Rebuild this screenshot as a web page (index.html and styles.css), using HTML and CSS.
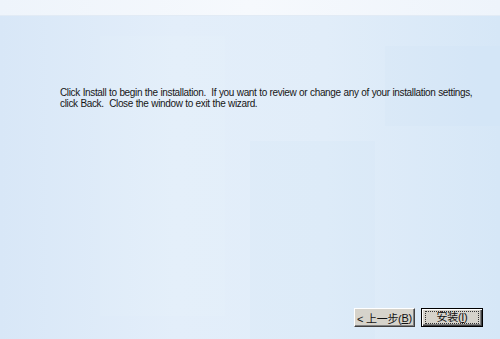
FILE: index.html
```html
<!DOCTYPE html>
<html>
<head>
<meta charset="utf-8">
<link rel="stylesheet" href="styles.css">
</head>
<body>
<div class="window">
  <div class="topband"></div>
  <div class="content">
    <div class="bg">
      <div class="blk b1"></div>
      <div class="blk b2"></div>
      <div class="blk b3"></div>
    </div>
    <p class="msg">Click Install to begin the installation.&nbsp; If you want to review or change any of your installation settings,<br>click Back.&nbsp; Close the window to exit the wizard.</p>
    <div class="buttons">
      <button class="btn">&lt; 上一步(<u>B</u>)</button>
      <button class="btn default"><span class="focus">安装(<u>I</u>)</span></button>
    </div>
  </div>
</div>
</body>
</html>
```
FILE: styles.css
```css
html, body {
  margin: 0;
  padding: 0;
}
body {
  width: 500px;
  height: 339px;
  overflow: hidden;
  font-family: "Liberation Sans", "DejaVu Sans", "Noto Sans CJK SC", sans-serif;
  font-size: 11px;
  color: #1a1a1a;
}
.window {
  display: flex;
  flex-direction: column;
  height: 339px;
}
.topband {
  height: 15px;
  background: linear-gradient(to right, #eef4fb, #f6f9fd 50%, #eef4fb);
  border-bottom: 1px solid #e2ebf5;
}
.content {
  position: relative;
  flex: 1;
  display: flex;
  flex-direction: column;
  background: linear-gradient(to right, #d8e7f7 0%, #e3eefa 35%, #e1edf9 65%, #d6e7f7 100%);
}
.bg {
  position: absolute;
  inset: 0;
  pointer-events: none;
}
.blk {
  position: absolute;
  background: rgba(255,255,255,0.06);
}
.b1 { left: 100px; top: 20px; width: 125px; height: 280px; }
.b2 { left: 250px; top: 125px; width: 125px; height: 200px; background: rgba(200,222,245,0.12); }
.b3 { left: 385px; top: 30px; width: 115px; height: 80px; background: rgba(200,222,245,0.12); }
.msg {
  position: relative;
  margin: 71px 0 0 60px;
  font-family: "Liberation Sans", sans-serif;
  font-size: 10px;
  letter-spacing: -0.35px;
  word-spacing: 0.3px;
  line-height: 11px;
  color: #161616;
  white-space: nowrap;
}
.buttons {
  position: relative;
  margin-top: auto;
  margin-bottom: 12px;
  margin-right: 17px;
  display: flex;
  justify-content: flex-end;
  gap: 6px;
}
.btn {
  width: 61px;
  height: 19px;
  padding: 0;
  font-family: inherit;
  font-size: 11px;
  letter-spacing: -0.3px;
  color: #111;
  background: #d6d3cb;
  border: 1px solid;
  border-color: #fff #404040 #404040 #fff;
  box-shadow: inset -1px -1px 0 #808080;
  display: flex;
  align-items: center;
  justify-content: center;
}
.btn u {
  text-decoration: underline;
}
.btn.default {
  width: 62px;
  border: 1px solid #000;
  box-shadow: inset 1px 1px 0 #fff, inset -1px -1px 0 #404040, inset -2px -2px 0 #808080;
}
.focus {
  flex: 1;
  margin: 0 3px;
  height: 11px;
  line-height: 11px;
  border: 1px dotted #333;
  text-align: center;
}
```
